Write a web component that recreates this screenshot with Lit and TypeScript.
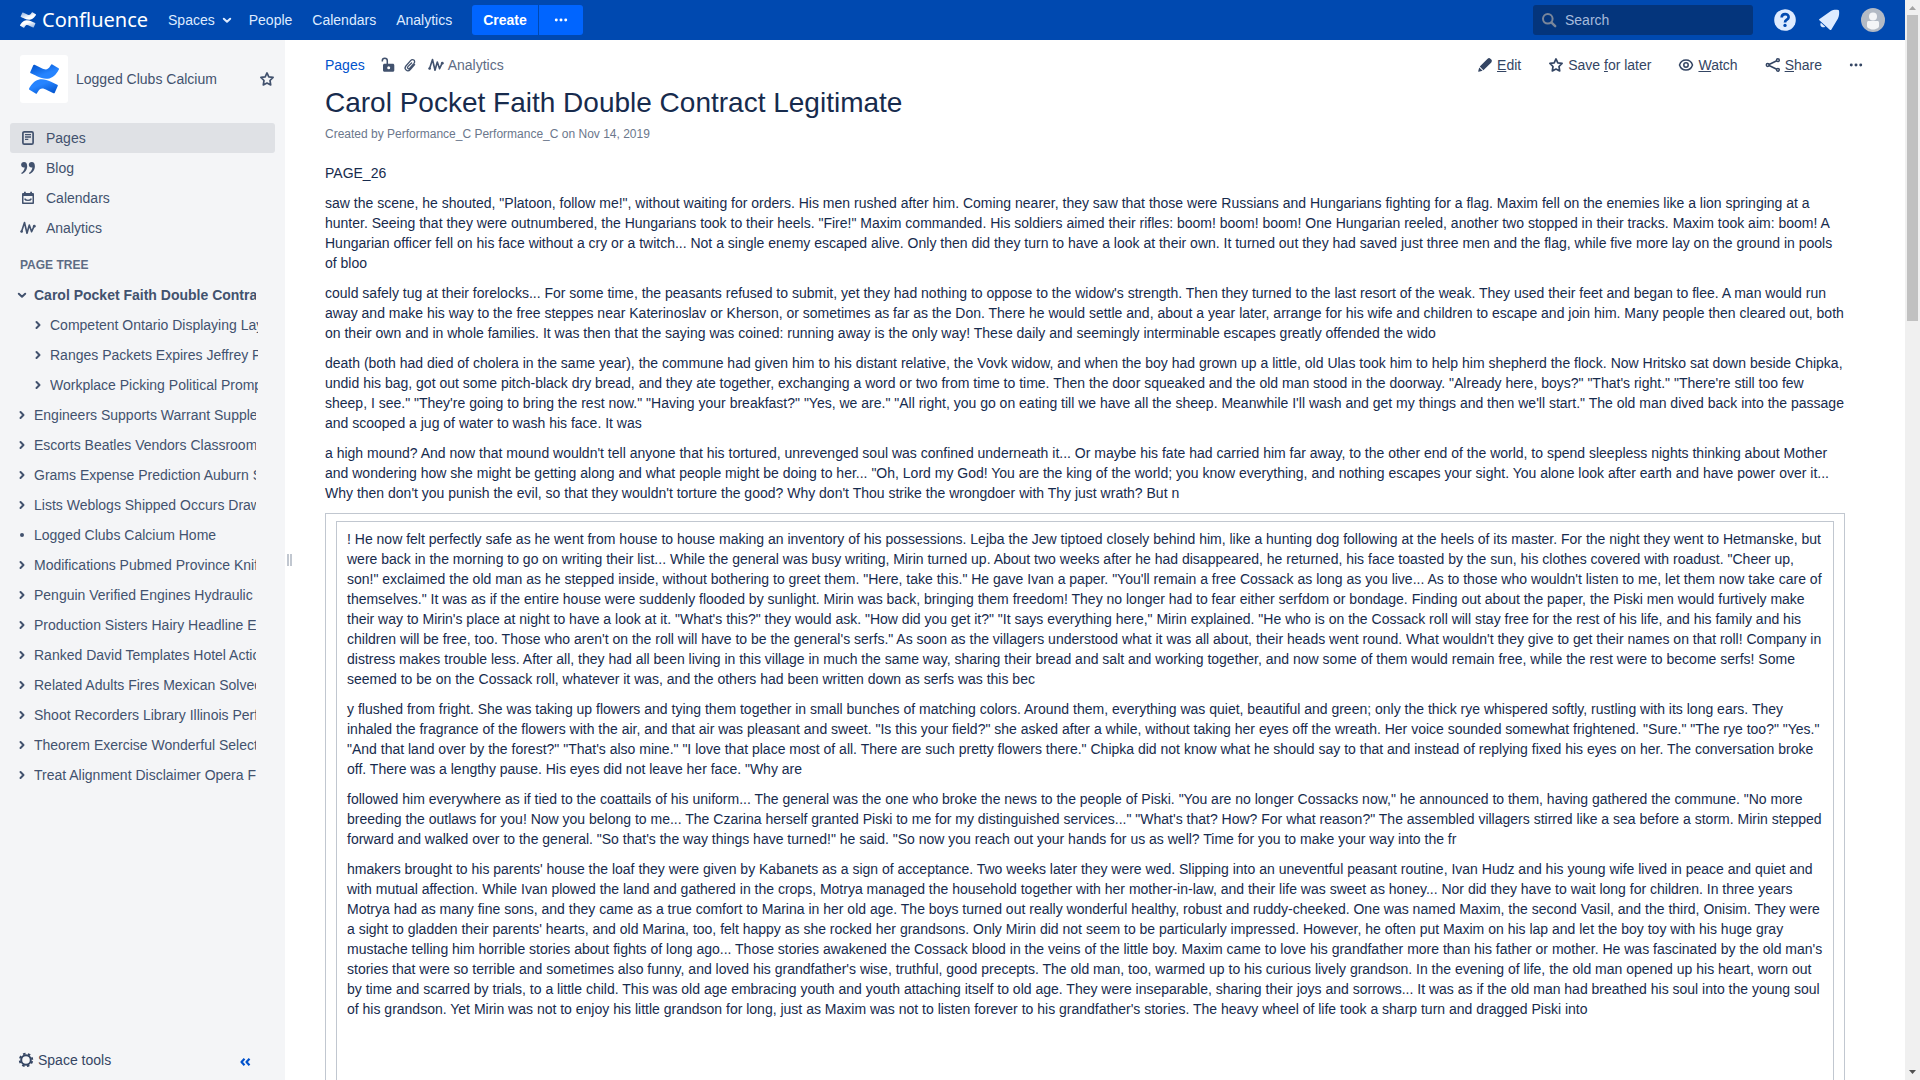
import { LitElement, html, svg, css, nothing, type TemplateResult } from "lit";
import { customElement, property } from "lit/decorators.js";
import { classMap } from "lit/directives/class-map.js";

const MARK_LOWER =
  "M.87 18.257c-.248.382-.53.875-.763 1.245a.764.764 0 0 0 .255 1.04l4.965 3.054a.764.764 0 0 0 1.058-.26c.199-.332.454-.763.733-1.221 1.967-3.247 3.945-2.853 7.508-1.146l4.957 2.337a.764.764 0 0 0 1.028-.382l2.364-5.346a.764.764 0 0 0-.382-1 599.851 599.851 0 0 1-4.965-2.361C10.911 10.97 5.224 11.185.87 18.257z";
const MARK_UPPER =
  "M23.131 5.743c.249-.405.531-.875.764-1.25a.764.764 0 0 0-.256-1.034L18.675.404a.764.764 0 0 0-1.058.26c-.195.335-.451.763-.734 1.225-1.966 3.246-3.945 2.85-7.508 1.146L4.437.694a.764.764 0 0 0-1.027.382L1.046 6.422a.764.764 0 0 0 .382 1c1.039.49 3.105 1.467 4.965 2.361 6.698 3.246 12.392 3.029 16.738-4.04z";

/* Glyphs are drawn on a 16 x 16 grid. */
const glyphs: Record<string, TemplateResult> = {
  chevronDown: svg`<path d="M4.800 6.800 8 9.800l3.200-3" fill="none" stroke="currentColor" stroke-width="2" stroke-linecap="round" stroke-linejoin="round"/>`,
  chevronRight: svg`<path d="M6.500 5 9.500 8l-3 3" fill="none" stroke="currentColor" stroke-width="2" stroke-linecap="round" stroke-linejoin="round"/>`,
  bullet: svg`<circle cx="8" cy="8" r="2"/>`,
  dots: svg`<circle cx="2.600" cy="8" r="1.700"/><circle cx="8" cy="8" r="1.700"/><circle cx="13.400" cy="8" r="1.700"/>`,
  search: svg`<circle cx="6.800" cy="6.800" r="4.800" fill="none" stroke="currentColor" stroke-width="2"/><path d="m10.600 10.600 3.600 3.600" stroke="currentColor" stroke-width="2.400" stroke-linecap="round"/>`,
  star: svg`<path d="m8 1.900 1.800 3.900 4.300.6-3.100 3.100.7 4.400L8 12 4.300 13.900l.7-4.400-3.100-3.100 4.300-.6z" fill="none" stroke="currentColor" stroke-width="1.700" stroke-linejoin="round"/>`,
  page: svg`<rect x="2.900" y="1.800" width="10.200" height="12.400" rx="1.400" fill="none" stroke="currentColor" stroke-width="1.700"/><path d="M5 4.700h6M5 7h6M5 9.300h3.300" stroke="currentColor" stroke-width="1.300"/>`,
  quotes: svg`<path d="M4 2C2.200 2 1.100 3.200 1.100 4.800S2.300 7.500 3.700 7.500c.5 0 .8-.1 1-.2C4.500 9.700 3.300 11.800 1.200 13l.6 1C5 12.800 7.200 9.800 7.200 6.200 7.200 3.600 6.100 2 4 2z"/><path d="M11.700 2c-1.800 0-2.900 1.200-2.900 2.800s1.200 2.700 2.600 2.700c.5 0 .8-.1 1-.2-.2 2.400-1.400 4.500-3.500 5.700l.6 1c3.200-1.200 5.400-4.200 5.400-7.800 0-2.600-1.100-4.200-3.200-4.200z"/>`,
  calendar: svg`<path fill-rule="evenodd" d="M4 1.800h1.800V3h4.400V1.800H12V3h.9c.6 0 1.100.5 1.100 1.100v8.800c0 .6-.5 1.100-1.100 1.100H3.100c-.6 0-1.100-.5-1.100-1.100V4.100C2 3.500 2.500 3 3.100 3H4zM3.500 6v6.500h9V6z"/><path d="M4.600 8.600c1.200 2.400 5.600 2.400 6.800 0" fill="none" stroke="currentColor" stroke-width="1.400"/>`,
  analytics: svg`<path d="M1.600 11.400 4.500 2.500 7 13.200 9.300 5 11.600 11.800 14 6.400" fill="none" stroke="currentColor" stroke-width="1.600" stroke-linejoin="round" stroke-linecap="round"/><circle cx="1.600" cy="11.500" r="1.300"/><circle cx="14.300" cy="6.200" r="1.400"/>`,
  unlock: svg`<path d="M2.300 4.500V3.800c0-3.300 5-3.300 5 0v4" fill="none" stroke="currentColor" stroke-width="1.500"/><path fill-rule="evenodd" d="M4.500 6.700h8.300c.9 0 1.500.6 1.500 1.500v5c0 .9-.6 1.500-1.500 1.500H4.500c-.9 0-1.500-.6-1.500-1.500v-5c0-.9.6-1.500 1.500-1.500zm4.200 2.600a1.500 1.500 0 1 0 0 3 1.500 1.500 0 0 0 0-3z"/>`,
  clip: svg`<path d="m12.600 7.600-4.300 4.900c-2.800 3.100-6.900-.4-4.400-3.500l4.700-5.400c2.100-2.400 5.400.2 3.400 2.700l-4.200 4.900c-1.200 1.400-3.100-.1-1.900-1.600L9.600 6" fill="none" stroke="currentColor" stroke-width="1.300" stroke-linecap="round"/>`,
  pencil: svg`<path d="M10.600 1.700c.9-.8 2-.8 2.800 0l.9.900c.8.800.8 1.900 0 2.800L6.400 13.200 2.800 9.600zM2.200 10.400l3.400 3.400-3.900 1c-.4.100-.6-.2-.5-.5z"/>`,
  eye: svg`<path d="M8 3c3.300 0 5.600 2.200 6.500 5-.9 2.800-3.200 5-6.500 5S2.400 10.800 1.500 8C2.400 5.200 4.700 3 8 3z" fill="none" stroke="currentColor" stroke-width="1.500"/><circle cx="8" cy="8" r="2.200" fill="none" stroke="currentColor" stroke-width="1.500"/>`,
  share: svg`<path d="M12.800 3.300 3 8l9.800 4.700" fill="none" stroke="currentColor" stroke-width="1.600"/><g fill="#fff" stroke="currentColor" stroke-width="1.500"><circle cx="2.700" cy="8" r="1.400"/><circle cx="12.900" cy="3.200" r="1.400"/><circle cx="12.900" cy="12.800" r="1.400"/></g>`,
  gear: svg`<circle cx="8" cy="8" r="4.800" fill="none" stroke="currentColor" stroke-width="2"/><circle cx="8" cy="8" r="6.300" fill="none" stroke="currentColor" stroke-width="1.800" stroke-dasharray="2.500 2.448" stroke-dashoffset="-1.200"/>`,
  collapse: svg`<path d="M7.500 4.800 4.500 8l3 3.200M12.500 4.800 9.500 8l3 3.200" fill="none" stroke="currentColor" stroke-width="2.200" stroke-linejoin="round"/>`,
  help: svg`<circle cx="8" cy="8" r="7.200"/><path d="M5.800 6.300c0-3 4.600-3 4.600-.2 0 1.700-2.400 1.700-2.400 3.500" fill="none" stroke="#0049b0" stroke-width="1.800"/><circle cx="8" cy="11.600" r="1.100" fill="#0049b0"/>`,
  bell: svg`<path d="M9 2.200c1.500-1 3.500-1.100 5.100-.9.400 0 .6.200.6.600.2 1.800.1 3.600-.8 5.200L9.500 14.500c-.2.300-.5.300-.8.100L1.600 8.200c-.3-.3-.3-.7.100-.9z"/><path d="M2.600 9.800c-1.200 2 .9 3.900 2.900 2.700z"/>`,
};

const icon = (name: string, size = 16) =>
  html`<svg class="icon" width=${size} height=${size} viewBox="0 0 16 16" fill="currentColor" aria-hidden="true">${glyphs[name]}</svg>`;

const mark = (size: number, from: string, to: string) => html`
  <svg class="icon" width=${size} height=${size} viewBox="0 0 24 24" aria-hidden="true">
    <defs>
      <linearGradient id="low" x1="0.900" y1="1" x2="0.300" y2="0.200">
        <stop offset="0" stop-color=${from}></stop><stop offset="0.800" stop-color=${to}></stop>
      </linearGradient>
      <linearGradient id="up" x1="0.100" y1="0" x2="0.700" y2="0.800">
        <stop offset="0" stop-color=${from}></stop><stop offset="0.800" stop-color=${to}></stop>
      </linearGradient>
    </defs>
    <path d=${MARK_LOWER} fill="url(#low)"></path>
    <path d=${MARK_UPPER} fill="url(#up)"></path>
  </svg>`;

const shared = css`
  :host {
    font-family: "Liberation Sans", Arial, sans-serif;
    font-size: 14px;
    line-height: 20px;
  }
  * {
    box-sizing: border-box;
  }
  a {
    color: inherit;
    text-decoration: none;
  }
  button {
    font: inherit;
    color: inherit;
    border: 0;
    padding: 0;
    background: none;
    cursor: pointer;
  }
  ul {
    list-style: none;
    margin: 0;
    padding: 0;
  }
  .icon {
    display: block;
    flex: none;
  }
`;

@customElement("site-header")
class SiteHeader extends LitElement {
  static styles = [
    shared,
    css`
      :host {
        display: block;
        flex: none;
      }
      .bar {
        display: flex;
        align-items: center;
        height: 40px;
        padding: 0 20px;
        background: #0049b0;
        color: #deebff;
      }
      .brand {
        display: flex;
        align-items: center;
        gap: 6px;
        margin-right: 10px;
        font-family: "Noto Sans", sans-serif;
        font-size: 20px;
        line-height: 28px;
        color: #fff;
      }
      .menu {
        display: flex;
      }
      .menu a {
        display: flex;
        align-items: center;
        gap: 4px;
        padding: 0 10px;
      }
      .menu .drop {
        padding-right: 4px;
      }
      .create {
        display: flex;
        gap: 1px;
        margin-left: 10px;
        color: #fff;
        font-weight: bold;
      }
      .create button {
        display: flex;
        align-items: center;
        justify-content: center;
        height: 30px;
        padding: 0 11px;
        background: #0065ff;
        border-radius: 3px 0 0 3px;
      }
      .create .more {
        padding: 0 15px;
        border-radius: 0 3px 3px 0;
      }
      .tools {
        display: flex;
        align-items: center;
        gap: 20px;
        margin-left: auto;
      }
      .search {
        display: flex;
        align-items: center;
        gap: 8px;
        width: 220px;
        height: 30px;
        padding: 0 8px;
        border-radius: 3px;
        background: #04357c;
        color: #7a869a;
      }
      .search input {
        flex: 1;
        min-width: 0;
        border: 0;
        padding: 0;
        outline: 0;
        background: none;
        font: inherit;
        color: #deebff;
      }
      .search input::placeholder {
        color: #a6bbdc;
        opacity: 1;
      }
    `,
  ];

  render() {
    return html`
      <header class="bar">
        <a class="brand" href="#home">${mark(16, "#8fb0e0", "#ffffff")}<span>Confluence</span></a>
        <nav class="menu">
          <a class="drop" href="#spaces">Spaces ${icon("chevronDown")}</a>
          <a href="#people">People</a>
          <a href="#calendars">Calendars</a>
          <a href="#analytics">Analytics</a>
        </nav>
        <div class="create">
          <button type="button">Create</button>
          <button type="button" class="more" aria-label="Create from template">${icon("dots", 14)}</button>
        </div>
        <div class="tools">
          <label class="search">${icon("search")}<input type="text" placeholder="Search" aria-label="Search" /></label>
          <button type="button" aria-label="Help">${icon("help", 24)}</button>
          <button type="button" aria-label="Notifications">${icon("bell", 24)}</button>
          <button type="button" aria-label="Profile">
            <svg class="icon" width="24" height="24" viewBox="0 0 24 24" aria-hidden="true">
              <circle cx="12" cy="12" r="12" fill="#b3bac5" />
              <circle cx="12" cy="8.500" r="4" fill="#f4f5f7" />
              <path d="M6 14.500c0-.8.700-1.500 1.500-1.500h9c.8 0 1.500.7 1.500 1.500v3.800c0 1.600-3 3.200-6 3.200s-6-1.600-6-3.200z" fill="#f4f5f7" />
            </svg>
          </button>
        </div>
      </header>
    `;
  }
}

interface TreeNode {
  title: string;
  state?: "open" | "leaf";
  children?: TreeNode[];
}

const tree: TreeNode[] = [
  {
    title: "Carol Pocket Faith Double Contract Legitimate",
    state: "open",
    children: [
      { title: "Competent Ontario Displaying Lay" },
      { title: "Ranges Packets Expires Jeffrey P" },
      { title: "Workplace Picking Political Promp" },
    ],
  },
  { title: "Engineers Supports Warrant Supple" },
  { title: "Escorts Beatles Vendors Classroom" },
  { title: "Grams Expense Prediction Auburn S" },
  { title: "Lists Weblogs Shipped Occurs Draw" },
  { title: "Logged Clubs Calcium Home", state: "leaf" },
  { title: "Modifications Pubmed Province Knif" },
  { title: "Penguin Verified Engines Hydraulic" },
  { title: "Production Sisters Hairy Headline E" },
  { title: "Ranked David Templates Hotel Actio" },
  { title: "Related Adults Fires Mexican Solved" },
  { title: "Shoot Recorders Library Illinois Perf" },
  { title: "Theorem Exercise Wonderful Select" },
  { title: "Treat Alignment Disclaimer Opera F" },
];

@customElement("space-sidebar")
class SpaceSidebar extends LitElement {
  static styles = [
    shared,
    css`
      :host {
        display: flex;
        flex-direction: column;
        flex: none;
        width: 285px;
        background: #f4f5f7;
        color: #42526e;
      }
      .space {
        display: flex;
        align-items: center;
        gap: 8px;
        padding: 15px 10px 20px 20px;
      }
      .logo {
        display: flex;
        align-items: center;
        justify-content: center;
        width: 48px;
        height: 48px;
        border-radius: 3px;
        background: #fff;
      }
      .name {
        flex: 1;
      }
      .nav {
        padding: 0 10px;
      }
      .nav a {
        display: flex;
        align-items: center;
        gap: 10px;
        height: 30px;
        padding: 0 10px;
        border-radius: 3px;
      }
      .nav .current {
        background: #dfe1e5;
      }
      .heading {
        margin: 12px 0 5px;
        padding: 0 20px;
        font-size: 12px;
        line-height: 20px;
        font-weight: bold;
        color: #5e6c84;
      }
      .tree {
        padding: 0 29px 0 14px;
      }
      .row {
        display: flex;
        align-items: center;
        gap: 4px;
        height: 30px;
      }
      .row button {
        flex: none;
      }
      .row a {
        flex: 1;
        min-width: 0;
        overflow: hidden;
        white-space: nowrap;
      }
      .row .active {
        font-weight: bold;
      }
      .nested {
        margin: 0 -2px 0 16px;
      }
      .foot {
        display: flex;
        align-items: center;
        justify-content: space-between;
        height: 40px;
        margin-top: auto;
        padding: 0 32px 0 18px;
        color: #344563;
      }
      .foot button {
        display: flex;
        align-items: center;
        gap: 4px;
      }
      .foot .fold {
        padding-top: 4px;
        color: #0052cc;
      }
    `,
  ];

  private branch(nodes: TreeNode[], nested = false): TemplateResult {
    return html`<ul class=${classMap({ nested })}>
      ${nodes.map(
        (n) => html`<li>
          <div class="row">
            ${n.state === "leaf"
              ? icon("bullet")
              : html`<button type="button" aria-label="Toggle children">
                  ${icon(n.state === "open" ? "chevronDown" : "chevronRight")}
                </button>`}
            <a href="#page" class=${classMap({ active: n.state === "open" })}>${n.title}</a>
          </div>
          ${n.children ? this.branch(n.children, true) : nothing}
        </li>`
      )}
    </ul>`;
  }

  render() {
    return html`
      <div class="space">
        <a class="logo" href="#space" aria-label="Space home">${mark(30, "#0052cc", "#2684ff")}</a>
        <a class="name" href="#space">Logged Clubs Calcium</a>
        <button type="button" aria-label="Add to favourites">${icon("star")}</button>
      </div>
      <nav class="nav">
        <a class="current" href="#pages">${icon("page")}Pages</a>
        <a href="#blog">${icon("quotes")}Blog</a>
        <a href="#calendars">${icon("calendar")}Calendars</a>
        <a href="#analytics">${icon("analytics")}Analytics</a>
      </nav>
      <h5 class="heading">PAGE TREE</h5>
      <div class="tree">${this.branch(tree)}</div>
      <div class="foot">
        <button type="button">${icon("gear")}Space tools</button>
        <button type="button" class="fold" aria-label="Collapse sidebar">${icon("collapse")}</button>
      </div>
    `;
  }
}

const intro = [
  "PAGE_26",
  `saw the scene, he shouted, "Platoon, follow me!", without waiting for orders. His men rushed after him. Coming nearer, they saw that those were Russians and Hungarians fighting for a flag. Maxim fell on the enemies like a lion springing at a hunter. Seeing that they were outnumbered, the Hungarians took to their heels. "Fire!" Maxim commanded. His soldiers aimed their rifles: boom! boom! boom! One Hungarian reeled, another two stopped in their tracks. Maxim took aim: boom! A Hungarian officer fell on his face without a cry or a twitch... Not a single enemy escaped alive. Only then did they turn to have a look at their own. It turned out they had saved just three men and the flag, while five more lay on the ground in pools of bloo`,
  `could safely tug at their forelocks... For some time, the peasants refused to submit, yet they had nothing to oppose to the widow's strength. Then they turned to the last resort of the weak. They used their feet and began to flee. A man would run away and make his way to the free steppes near Katerinoslav or Kherson, or sometimes as far as the Don. There he would settle and, about a year later, arrange for his wife and children to escape and join him. Many people then cleared out, both on their own and in whole families. It was then that the saying was coined: running away is the only way! These daily and seemingly interminable escapes greatly offended the wido`,
  `death (both had died of cholera in the same year), the commune had given him to his distant relative, the Vovk widow, and when the boy had grown up a little, old Ulas took him to help him shepherd the flock. Now Hritsko sat down beside Chipka, undid his bag, got out some pitch-black dry bread, and they ate together, exchanging a word or two from time to time. Then the door squeaked and the old man stood in the doorway. "Already here, boys?" "That's right." "There're still too few sheep, I see." "They're going to bring the rest now." "Having your breakfast?" "Yes, we are." "All right, you go on eating till we have all the sheep. Meanwhile I'll wash and get my things and then we'll start." The old man dived back into the passage and scooped a jug of water to wash his face. It was`,
  `a high mound? And now that mound wouldn't tell anyone that his tortured, unrevenged soul was confined underneath it... Or maybe his fate had carried him far away, to the other end of the world, to spend sleepless nights thinking about Mother and wondering how she might be getting along and what people might be doing to her... "Oh, Lord my God! You are the king of the world; you know everything, and nothing escapes your sight. You alone look after earth and have power over it... Why then don't you punish the evil, so that they wouldn't torture the good? Why don't Thou strike the wrongdoer with Thy just wrath? But n`,
];

const boxed = [
  `! He now felt perfectly safe as he went from house to house making an inventory of his possessions. Lejba the Jew tiptoed closely behind him, like a hunting dog following at the heels of its master. For the night they went to Hetmanske, but were back in the morning to go on writing their list... While the general was busy writing, Mirin turned up. About two weeks after he had disappeared, he returned, his face toasted by the sun, his clothes covered with roadust. "Cheer up, son!" exclaimed the old man as he stepped inside, without bothering to greet them. "Here, take this." He gave Ivan a paper. "You'll remain a free Cossack as long as you live... As to those who wouldn't listen to me, let them now take care of themselves." It was as if the entire house were suddenly flooded by sunlight. Mirin was back, bringing them freedom! They no longer had to fear either serfdom or bondage. Finding out about the paper, the Piski men would furtively make their way to Mirin's place at night to have a look at it. "What's this?" they would ask. "How did you get it?" "It says everything here," Mirin explained. "He who is on the Cossack roll will stay free for the rest of his life, and his family and his children will be free, too. Those who aren't on the roll will have to be the general's serfs." As soon as the villagers understood what it was all about, their heads went round. What wouldn't they give to get their names on that roll! Company in distress makes trouble less. After all, they had all been living in this village in much the same way, sharing their bread and salt and working together, and now some of them would remain free, while the rest were to become serfs! Some seemed to be on the Cossack roll, whatever it was, and the others had been written down as serfs was this bec`,
  `y flushed from fright. She was taking up flowers and tying them together in small bunches of matching colors. Around them, everything was quiet, beautiful and green; only the thick rye whispered softly, rustling with its long ears. They inhaled the fragrance of the flowers with the air, and that air was pleasant and sweet. "Is this your field?" she asked after a while, without taking her eyes off the wreath. Her voice sounded somewhat frightened. "Sure." "The rye too?" "Yes." "And that land over by the forest?" "That's also mine." "I love that place most of all. There are such pretty flowers there." Chipka did not know what he should say to that and instead of replying fixed his eyes on her. The conversation broke off. There was a lengthy pause. His eyes did not leave her face. "Why are`,
  `followed him everywhere as if tied to the coattails of his uniform... The general was the one who broke the news to the people of Piski. "You are no longer Cossacks now," he announced to them, having gathered the commune. "No more breeding the outlaws for you! Now you belong to me... The Czarina herself granted Piski to me for my distinguished services..." "What's that? How? For what reason?" The assembled villagers stirred like a sea before a storm. Mirin stepped forward and walked over to the general. "So that's the way things have turned!" he said. "So now you reach out your hands for us as well? Time for you to make your way into the fr`,
  `hmakers brought to his parents' house the loaf they were given by Kabanets as a sign of acceptance. Two weeks later they were wed. Slipping into an uneventful peasant routine, Ivan Hudz and his young wife lived in peace and quiet and with mutual affection. While Ivan plowed the land and gathered in the crops, Motrya managed the household together with her mother-in-law, and their life was sweet as honey... Nor did they have to wait long for children. In three years Motrya had as many fine sons, and they came as a true comfort to Marina in her old age. The boys turned out really wonderful healthy, robust and ruddy-cheeked. One was named Maxim, the second Vasil, and the third, Onisim. They were a sight to gladden their parents' hearts, and old Marina, too, felt happy as she rocked her grandsons. Only Mirin did not seem to be particularly impressed. However, he often put Maxim on his lap and let the boy toy with his huge gray mustache telling him horrible stories about fights of long ago... Those stories awakened the Cossack blood in the veins of the little boy. Maxim came to love his grandfather more than his father or mother. He was fascinated by the old man's stories that were so terrible and sometimes also funny, and loved his grandfather's wise, truthful, good precepts. The old man, too, warmed up to his curious lively grandson. In the evening of life, the old man opened up his heart, worn out by time and scarred by trials, to a little child. This was old age embracing youth and youth attaching itself to old age. They were inseparable, sharing their joys and sorrows... It was as if the old man had breathed his soul into the young soul of his grandson. Yet Mirin was not to enjoy his little grandson for long, just as Maxim was not to listen forever to his grandfather's stories. The heavy wheel of life took a sharp turn and dragged Piski into`,
];

@customElement("wiki-page")
class WikiPage extends LitElement {
  @property() heading = "";

  static styles = [
    shared,
    css`
      :host {
        display: flex;
        flex-direction: column;
        flex: 1;
        min-width: 0;
        padding: 10px 60px 0 30px;
        background: #fff;
        color: #172b4d;
      }
      .top {
        display: flex;
        flex: none;
        align-items: center;
        justify-content: space-between;
        height: 30px;
      }
      .crumbs,
      .actions,
      .crumbs a,
      .actions button {
        display: flex;
        align-items: center;
      }
      .crumbs {
        color: #42526e;
      }
      .crumbs .root {
        margin-right: 15px;
        color: #0052cc;
      }
      .crumbs .tool {
        margin-right: 6px;
      }
      .crumbs .stats {
        gap: 4px;
        margin-left: 4px;
        color: #5e6c84;
      }
      .crumbs .stats .icon {
        color: #42526e;
      }
      .actions {
        gap: 27px;
        margin-right: -18px;
        color: #344563;
      }
      .actions button {
        gap: 4px;
      }
      .title {
        margin: 7px 0 5px;
        font-size: 28px;
        line-height: 32px;
        font-weight: normal;
      }
      .meta {
        margin: 0 0 19px;
        font-size: 12px;
        color: #6b778c;
      }
      p {
        margin: 0 0 10px;
      }
      .outer {
        display: flex;
        flex: 1 0 auto;
        padding: 7px 10px 0;
        border: 1px solid #c1c7d0;
        border-bottom: 0;
      }
      .inner {
        flex: 1;
        padding: 7px 10px 60px;
        border: 1px solid #c1c7d0;
        border-bottom: 0;
      }
    `,
  ];

  render() {
    return html`
      <div class="top">
        <nav class="crumbs">
          <a class="root" href="#pages">Pages</a>
          <a class="tool" href="#restrictions" aria-label="Restrictions">${icon("unlock")}</a>
          <a class="tool" href="#attachments" aria-label="Attachments">${icon("clip")}</a>
          <a class="stats" href="#analytics">${icon("analytics")}Analytics</a>
        </nav>
        <div class="actions">
          <button type="button">${icon("pencil")}<span><u>E</u>dit</span></button>
          <button type="button">${icon("star")}<span>Save <u>f</u>or later</span></button>
          <button type="button">${icon("eye")}<span><u>W</u>atch</span></button>
          <button type="button">${icon("share")}<span><u>S</u>hare</span></button>
          <button type="button" aria-label="More actions">${icon("dots", 14)}</button>
        </div>
      </div>
      <h1 class="title">${this.heading}</h1>
      <div class="meta">Created by <a href="#user">Performance_C Performance_C</a> on <a href="#history">Nov 14, 2019</a></div>
      ${intro.map((t) => html`<p>${t}</p>`)}
      <div class="outer"><div class="inner">${boxed.map((t) => html`<p>${t}</p>`)}</div></div>
    `;
  }
}

@customElement("app-root")
class AppRoot extends LitElement {
  static styles = [
    shared,
    css`
      :host {
        display: flex;
        height: 100vh;
        overflow: hidden;
        background: #fff;
      }
      .page {
        display: flex;
        flex-direction: column;
        flex: 1;
        min-width: 0;
      }
      .body {
        display: flex;
        flex: 1;
        min-height: 0;
        overflow: hidden;
      }
      .grip {
        display: flex;
        flex: none;
        align-items: center;
        gap: 1px;
        width: 10px;
        padding-left: 2px;
      }
      .grip i {
        width: 2px;
        height: 12px;
        background: #c1c7d0;
      }
      .scroll {
        display: flex;
        flex-direction: column;
        flex: none;
        width: 15px;
        background: #f0f0f0;
      }
      .thumb {
        flex: 306;
        margin: 0 2px;
        background: #c1c1c1;
      }
      .rest {
        flex: 744;
      }
    `,
  ];

  render() {
    return html`
      <div class="page">
        <site-header></site-header>
        <div class="body">
          <space-sidebar></space-sidebar>
          <div class="grip"><i></i><i></i></div>
          <wiki-page heading="Carol Pocket Faith Double Contract Legitimate"></wiki-page>
        </div>
      </div>
      <div class="scroll" aria-hidden="true">
        <svg class="icon" width="15" height="15" viewBox="0 0 15 15"><path d="M4 10h7L7.500 6z" fill="#a3a3a3" /></svg>
        <div class="thumb"></div>
        <div class="rest"></div>
        <svg class="icon" width="15" height="15" viewBox="0 0 15 15"><path d="M4 5h7L7.500 9z" fill="#505050" /></svg>
      </div>
    `;
  }
}
